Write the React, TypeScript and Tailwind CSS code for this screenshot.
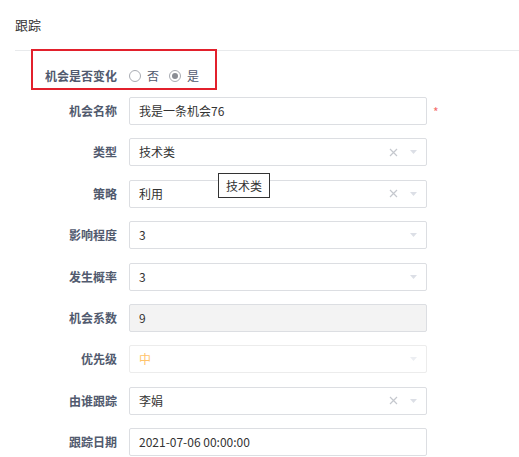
import React from 'react';

type Field = {
  label: string;
  value: string;
  kind: 'input' | 'select' | 'disabled' | 'readonly-select';
  clearable?: boolean;
  required?: boolean;
  valueClass?: string;
};

const fields: Field[] = [
  { label: '机会名称', value: '我是一条机会76', kind: 'input', required: true },
  { label: '类型', value: '技术类', kind: 'select', clearable: true },
  { label: '策略', value: '利用', kind: 'select', clearable: true },
  { label: '影响程度', value: '3', kind: 'select' },
  { label: '发生概率', value: '3', kind: 'select' },
  { label: '机会系数', value: '9', kind: 'disabled' },
  { label: '优先级', value: '中', kind: 'readonly-select', valueClass: 'text-[#ffc46b]' },
  { label: '由谁跟踪', value: '李娟', kind: 'select', clearable: true },
  { label: '跟踪日期', value: '2021-07-06 00:00:00', kind: 'input' },
];

const ClearIcon = () => (
  <svg width="9" height="9" viewBox="0 0 9 9" className="shrink-0">
    <path d="M1 1 L8 8 M8 1 L1 8" stroke="#c5c8ce" strokeWidth="1.2" fill="none" />
  </svg>
);

const Caret = ({ faded = false }: { faded?: boolean }) => (
  <svg width="7" height="4" viewBox="0 0 7 4" className="shrink-0">
    <path d="M0 0 L7 0 L3.5 4 Z" fill={faded ? '#eceef2' : '#dcdfe6'} />
  </svg>
);

const Radio = ({ checked, label }: { checked: boolean; label: string }) => (
  <label className="flex items-center">
    <span className="w-[12px] h-[12px] rounded-full border border-[#a8abb2] flex items-center justify-center bg-white">
      {checked && <span className="w-[6px] h-[6px] rounded-full bg-[#8a8d94]" />}
    </span>
    <span className="ml-[6px]">{label}</span>
  </label>
);

const FieldBox = ({ field }: { field: Field }) => {
  const base = 'w-[298px] h-[28px] rounded-[2px] border flex items-center pl-[9px] pr-[9px]';
  const tone =
    field.kind === 'disabled'
      ? 'bg-[#f3f3f3] border-[#dcdee2]'
      : field.kind === 'readonly-select'
      ? 'bg-white border-[#ececec]'
      : 'bg-white border-[#dcdee2]';
  const hasCaret = field.kind === 'select' || field.kind === 'readonly-select';

  return (
    <div className={`${base} ${tone}`}>
      <span className={`flex-1 truncate ${field.valueClass ?? 'text-[#333]'}`}>{field.value}</span>
      {field.clearable && (
        <span className="mr-[12px] flex items-center">
          <ClearIcon />
        </span>
      )}
      {hasCaret && <Caret faded={field.kind === 'readonly-select'} />}
    </div>
  );
};

export default function App() {
  return (
    <div
      className="relative w-[519px] h-[457px] bg-white overflow-hidden text-[12px]"
      style={{ fontFamily: '"Noto Sans CJK SC", "Liberation Sans", sans-serif' }}
    >
      <div className="ml-[15px] h-[51px] border-b border-[#e8eaec] flex items-center">
        <span className="text-[13px] text-[#333] -mt-[1px]">跟踪</span>
      </div>

      <div className="flex flex-col pt-[11px]">
        {/* change flag */}
        <div className="relative flex items-center h-[28px] mb-[7px]">
          <div className="w-[117px] text-right font-bold text-[#515a6e]">机会是否变化</div>
          <div className="ml-[12px] flex items-center gap-[10px] text-[#515a6e]">
            <Radio checked={false} label="否" />
            <Radio checked={true} label="是" />
          </div>
          <div className="absolute left-[31px] top-[-13px] w-[186px] h-[41px] border-2 border-[#e2202c] pointer-events-none" />
        </div>

        <div className="flex flex-col gap-[13.4px]">
          {fields.map((field) => (
            <div key={field.label} className="flex items-center h-[28px]">
              <div className="w-[117px] text-right font-bold text-[#515a6e]">{field.label}</div>
              <div className="ml-[12px]">
                <FieldBox field={field} />
              </div>
              {field.required && (
                <span className="ml-[6px] text-[#f56c6c] text-[12px] leading-none mt-[2px]">*</span>
              )}
            </div>
          ))}
        </div>
      </div>

      {/* hover tooltip over the type select */}
      <div className="absolute left-[218px] top-[173px] w-[52px] h-[25px] border border-[#333] bg-white flex items-center justify-center text-[12px] text-[#333]">
        技术类
      </div>
    </div>
  );
}
